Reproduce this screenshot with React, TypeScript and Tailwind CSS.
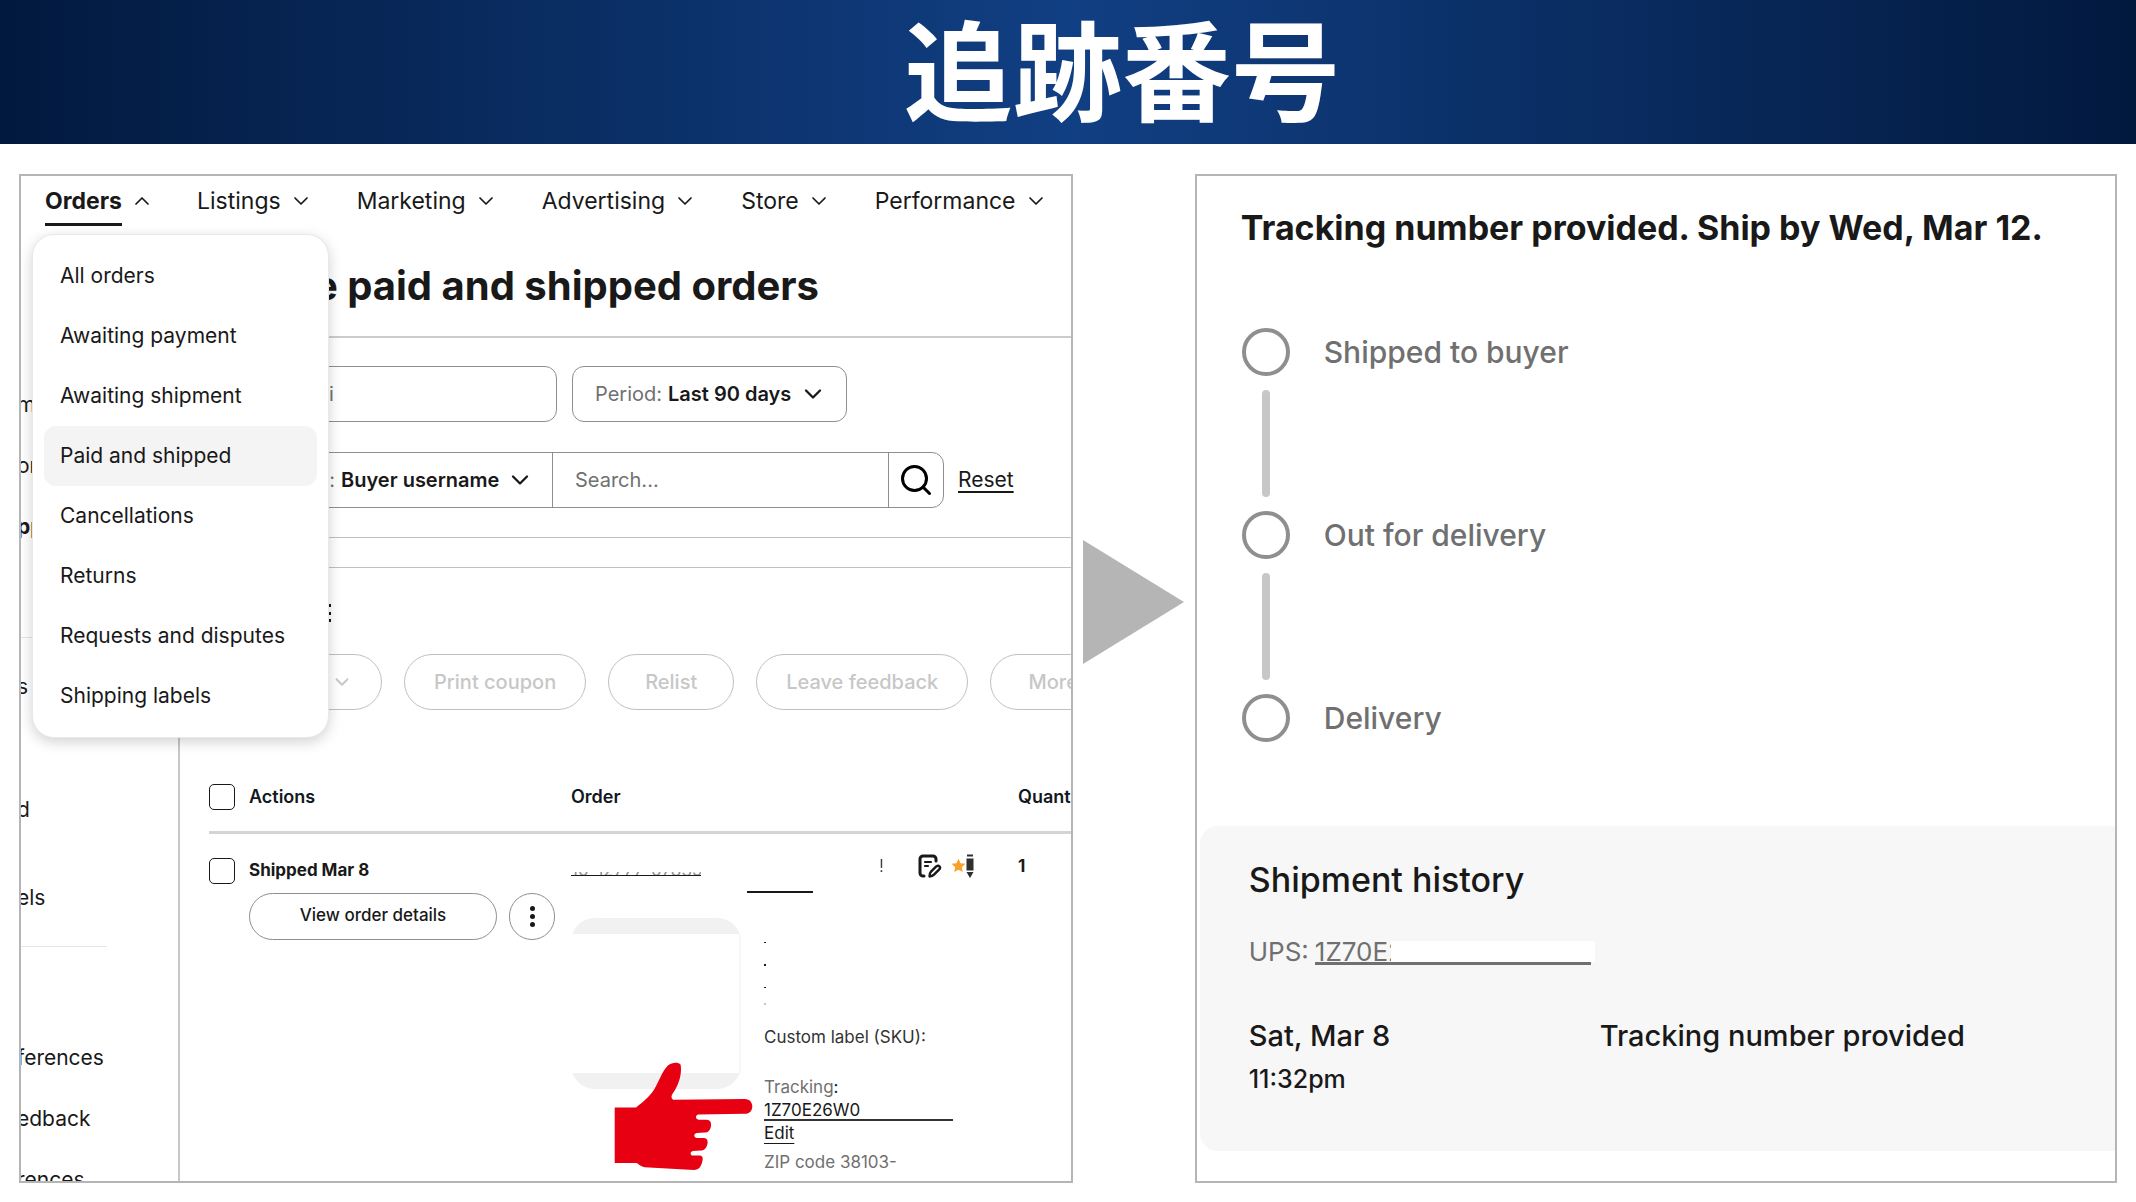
import { Search, ChevronDown, ChevronUp } from "lucide-react";
import type { ReactNode } from "react";

const navItems = ["Listings", "Marketing", "Advertising", "Store", "Performance"];

const orderMenu = [
    "All orders",
    "Awaiting payment",
    "Awaiting shipment",
    "Paid and shipped",
    "Cancellations",
    "Returns",
    "Requests and disputes",
    "Shipping labels",
];

const trackingSteps = ["Shipped to buyer", "Out for delivery", "Delivery"];

const PillButton = ({ children }: { children: ReactNode }) => (
    <button
        disabled
        className="flex h-14 min-w-[126px] shrink-0 items-center justify-center whitespace-nowrap rounded-full border border-[#c0c0c0] px-[29px] text-[20px] font-medium text-[#c7c7c7]"
    >
        {children}
    </button>
);

const Checkbox = ({ label }: { label: string }) => (
    <input
        type="checkbox"
        aria-label={label}
        className="size-[26px] shrink-0 appearance-none rounded-[5px] border border-[#191919]"
    />
);

const NoteIcon = () => (
    <svg viewBox="0 0 24 24" className="size-6" fill="none" stroke="#191919" strokeWidth="3" strokeLinecap="round" strokeLinejoin="round">
        <path d="M18 7V5a3 3 0 0 0-3-3H5a3 3 0 0 0-3 3v14a3 3 0 0 0 3 3h1" />
        <path d="M7 8h6M7 12h3" strokeWidth="2.2" />
        <path d="M11.5 22.5c0-3 .3-3.600 1.500-4.800l5-5c1.200-1.200 2.600-1.200 3.400-.4s.8 2.200-.4 3.400l-5 5c-1.200 1.200-1.700 1.600-4.500 1.800z" strokeWidth="2.4" />
    </svg>
);

const StarIcon = () => (
    <svg viewBox="0 0 24 24" className="size-[15px]" fill="#f9a12b">
        <path d="M12 1l3.300 7.300 7.700.9-5.700 5.400 1.500 7.900L12 18.600l-6.800 3.900 1.500-7.900L1 9.200l7.700-.9z" />
    </svg>
);

const PencilIcon = () => (
    <svg viewBox="0 0 8 24" className="h-6 w-2" fill="#2f2f2f">
        <path d="M1 0.500h6v2H1zM0.500 4.500h7v12h-7zM0.500 18h7L5.500 21.500 4 24 2.500 21.500z" />
    </svg>
);

const PointingHand = () => (
    <svg viewBox="206 304 390 326" preserveAspectRatio="none" className="absolute left-[43px] top-[144px] h-[109px] w-[139px]" fill="#e60012">
        <path d="M208 440H268C290 422 312 402 324 376C336 352 344 328 358 314C368 305 386 303 393 312C397 340 388 368 378 386C370 400 362 408 372 417L573 415C587 415 594 426 594 437C594 449 587 459 573 459L442 461C434 463 434 475 443 477L466 477C477 478 479 486 478 496C476 508 470 515 460 515L438 516C429 518 429 530 438 531L459 531C468 532 470 540 468 549C466 560 460 568 450 569L427 570C419 572 419 583 427 584L446 584C455 585 456 592 454 600C451 616 445 626 430 627L292 619C282 617 276 610 270 606H208Z" />
    </svg>
);

const OrdersNav = () => (
    <nav className="flex items-center whitespace-nowrap pl-6 text-[23px]">
        <div className="relative mr-[43px]">
            <button className="flex h-[50px] items-center gap-2">
                <span className="flex h-[50px] items-center border-b-[3px] border-[#191919] pt-[3px] font-bold">Orders</span>
                <ChevronUp className="size-6" strokeWidth={1.75} />
            </button>
            <ul className="absolute -left-[13px] top-[58px] z-10 w-[297px] rounded-[22px] border border-[#e8e8e8] bg-white px-[11px] py-[11px] text-[21px] shadow-[0_4px_14px_rgba(0,0,0,0.18)]">
                {orderMenu.map((item) => (
                    <li key={item}>
                        <a
                            href="#"
                            className={
                                item === "Paid and shipped"
                                    ? "flex h-[60px] items-center rounded-xl bg-[#f4f4f4] px-4"
                                    : "flex h-[60px] items-center rounded-xl px-4"
                            }
                        >
                            {item}
                        </a>
                    </li>
                ))}
            </ul>
        </div>
        {navItems.map((item) => (
            <button key={item} className="mr-11 flex h-[50px] items-center gap-2">
                {item}
                <ChevronDown className="size-6" strokeWidth={1.75} />
            </button>
        ))}
    </nav>
);

// The side menu runs off the left edge of the panel, only the word ends are left
const SideMenu = () => (
    <aside className="-ml-1 mt-5 w-[163px] shrink-0 border-r-2 border-[#c7c7c7] pt-32 text-[21px] leading-[61px]">
        <a href="#" className="block">m</a>
        <a href="#" className="block">or</a>
        <a href="#" className="block font-bold">pp</a>
        <hr className="mr-[71px] mt-20 border-[#e5e5e5]" />
        <a href="#" className="mt-[18px] block">s</a>
        <a href="#" className="mt-[62px] block">d</a>
        <a href="#" className="mt-[27px] block">els</a>
        <hr className="mr-[71px] mt-[18px] border-[#e5e5e5]" />
        <a href="#" className="mt-20 block">ferences</a>
        <a href="#" className="block">edback</a>
        <a href="#" className="block h-8 overflow-hidden">rences</a>
    </aside>
);

const Filters = () => (
    <div className="border-b border-[#c0c0c0] pb-[29px] pl-[29px] pt-7 text-[20px]">
        <div className="flex gap-[15px]">
            <input
                aria-label="Filter"
                defaultValue="i"
                className="h-14 w-[348px] rounded-xl border border-[#8f8f8f] pl-[119px] text-[#707070]"
            />
            <label className="flex h-14 items-center rounded-xl border border-[#8f8f8f] pl-[22px] pr-[19px] text-[#707070]">
                Period:
                <select className="ml-[6px] w-[131px] appearance-none font-semibold text-[#191919]">
                    <option>Last 90 days</option>
                </select>
                <ChevronDown className="size-7 text-[#191919]" />
            </label>
        </div>
        <div className="mt-[30px] flex items-center">
            <div className="flex h-14 w-[735px] overflow-hidden rounded-xl border border-[#8f8f8f]">
                <label className="flex w-[343px] items-center justify-end border-r border-[#8f8f8f] pr-[18px] text-[#707070]">
                    Search by:
                    <select className="ml-[6px] w-[165px] appearance-none font-semibold text-[#191919]">
                        <option>Buyer username</option>
                    </select>
                    <ChevronDown className="size-7 text-[#191919]" />
                </label>
                <input aria-label="Search" placeholder="Search..." className="min-w-0 flex-1 px-[22px] placeholder:text-[#707070]" />
                <button aria-label="Search" className="flex w-[55px] items-center justify-center border-l border-[#8f8f8f] text-black">
                    <Search className="size-9" />
                </button>
            </div>
            <a href="#" className="ml-[14px] text-[21px] underline underline-offset-4">Reset</a>
        </div>
    </div>
);

const OrdersTable = () => (
    <table className="ml-[29px] mt-[53px] w-[950px] table-fixed text-left text-[17px]">
        <colgroup>
            <col className="w-[362px]" />
            <col className="w-[447px]" />
            <col />
        </colgroup>
        <thead className="border-b-[3px] border-[#d4d4d4]">
            <tr className="h-[69px] text-[18px] text-[#111820]">
                <th className="font-semibold">
                    <div className="flex items-center gap-[14px]">
                        <Checkbox label="Select all" />
                        Actions
                    </div>
                </th>
                <th className="font-semibold">Order</th>
                <th className="font-semibold">Quantity</th>
            </tr>
        </thead>
        <tbody>
            <tr className="align-top">
                <td className="pt-6">
                    <div className="flex gap-[14px]">
                        <Checkbox label="Select order" />
                        <div>
                            <p className="font-bold leading-6">Shipped Mar 8</p>
                            <div className="mt-[11px] flex gap-3">
                                <button className="h-[47px] w-[248px] rounded-full border border-[#8f8f8f] font-medium">View order details</button>
                                <button aria-label="More actions" className="flex h-[47px] w-[46px] flex-col items-center justify-center gap-[3px] rounded-full border border-[#8f8f8f]">
                                    <span className="size-[5px] rounded-full bg-[#191919]" />
                                    <span className="size-[5px] rounded-full bg-[#191919]" />
                                    <span className="size-[5px] rounded-full bg-[#191919]" />
                                </button>
                            </div>
                        </div>
                    </div>
                </td>
                <td className="pt-5">
                    <div className="flex h-16 items-start">
                        <a href="#" aria-label="Order number" className="mt-[18px] flex h-1 w-[130px] items-end overflow-hidden whitespace-nowrap border-b border-[#191919] leading-[10px] text-[#8f8f8f]">
                            10-12777-07839
                        </a>
                        <a href="#" aria-label="Buyer" className="ml-[46px] h-[39px] w-[66px] border-b-2 border-[#191919]" />
                        <span className="ml-[66px] w-[39px] font-light leading-6">!</span>
                        <NoteIcon />
                        <div className="ml-[9px] flex items-center">
                            <StarIcon />
                            <PencilIcon />
                        </div>
                    </div>
                    <div className="relative flex gap-[23px]">
                        <div className="h-[171px] w-[170px] rounded-[24px] bg-[#f1f1f1] py-4">
                            <div className="h-full border-r-2 border-[#f7f7f7] bg-white" />
                        </div>
                        <div className="leading-[23px]">
                            <div className="flex h-[87px] flex-col gap-[21px] pt-6">
                                <span className="size-[2px] bg-[#191919]" />
                                <span className="size-[2px] bg-[#191919]" />
                                <span className="size-[2px] bg-[#191919]" />
                                <span className="-mt-[6px] size-[2px] bg-[#c7c7c7]" />
                            </div>
                            <p className="mt-[21px] text-[#333333]">Custom label (SKU):</p>
                            <p className="mt-[27px] text-[#707070]">
                                Tracking<span className="text-[#191919]">:</span>
                            </p>
                            <a href="#" className="block h-[22px] w-[189px] border-b-2 border-[#333333]">1Z70E26W0</a>
                            <a href="#" className="mt-px block underline underline-offset-4">Edit</a>
                            <p className="mb-1 mt-[6px] text-[#707070]">ZIP code 38103-</p>
                        </div>
                        <PointingHand />
                    </div>
                </td>
                <td className="pt-5 font-bold leading-6">1</td>
            </tr>
        </tbody>
    </table>
);

const OrdersPanel = () => (
    <section className="min-w-0 flex-[1054] overflow-hidden border-2 border-[#b5b5b5]">
        <OrdersNav />
        <div className="flex">
            <SideMenu />
            <div className="min-w-0 flex-1 overflow-hidden">
                <h2 className="whitespace-nowrap border-b-2 border-[#cccccc] pb-[26px] pt-9 text-[40px] font-bold leading-[48px]">
                    Manage paid and shipped orders
                </h2>
                <Filters />
                <div className="mt-[29px] border-t border-[#c0c0c0] pt-[36px]">
                    <div className="ml-[148px] flex h-[18px] w-[3px] flex-col justify-between">
                        <span className="h-[3px] bg-[#191919]" />
                        <span className="h-[3px] bg-[#191919]" />
                        <span className="h-[3px] bg-[#191919]" />
                    </div>
                </div>
                <div className="mt-8 flex gap-[22px] pl-[29px]">
                    <button disabled className="flex h-14 w-[173px] shrink-0 items-center justify-end rounded-full border border-[#c0c0c0] pr-7 text-[20px] font-medium text-[#c7c7c7]">
                        Shipping
                        <ChevronDown className="ml-2 size-[22px]" />
                    </button>
                    <PillButton>Print coupon</PillButton>
                    <PillButton>Relist</PillButton>
                    <PillButton>Leave feedback</PillButton>
                    <PillButton>More</PillButton>
                </div>
                <OrdersTable />
            </div>
        </div>
    </section>
);

const TrackingPanel = () => (
    <section className="flex min-w-0 flex-[922] flex-col overflow-hidden border-2 border-[#b5b5b5]">
        <h2 className="whitespace-nowrap pl-11 pt-8 text-[34px] font-bold leading-10">
            Tracking number provided. Ship by Wed, Mar 12.
        </h2>
        <ol className="pl-[45px] pt-20 text-[30px] font-medium text-[#707070]">
            {trackingSteps.map((step, i) => (
                <li key={step}>
                    <div className="flex h-12 items-center gap-[34px]">
                        <span className="size-12 rounded-full border-4 border-[#8f8f8f]" />
                        {step}
                    </div>
                    {i < trackingSteps.length - 1 && (
                        <div className="my-[14px] ml-5 h-[107px] w-2 rounded-full bg-[#c7c7c7]" />
                    )}
                </li>
            ))}
        </ol>
        <div className="mb-[30px] ml-[3px] mt-auto rounded-l-[18px] bg-[#f7f7f7] pb-[49px] pl-[49px] pt-8">
            <h3 className="text-[34px] font-medium leading-[44px]">Shipment history</h3>
            <div className="mt-[39px] flex text-[26px] leading-[21px] text-[#707070]">
                UPS:
                <a href="#" aria-label="Tracking number" className="ml-[6px] flex h-6 w-[276px] border-b-[3px] border-[#707070]">
                    <span className="w-[76px] overflow-hidden">1Z70E26W0</span>
                    <span className="-mr-1 flex-1 bg-white" />
                </a>
            </div>
            <div className="mt-[51px] flex text-[29px] font-medium leading-10">
                <div className="w-[351px]">
                    <p>Sat, Mar 8</p>
                    <p className="text-[25px] leading-[46px]">11:32pm</p>
                </div>
                <p className="whitespace-nowrap">Tracking number provided</p>
            </div>
        </div>
    </section>
);

export default function App() {
    return (
        <div className="bg-white font-['Inter','Liberation_Sans',sans-serif] text-[#191919]">
            <header className="bg-[linear-gradient(to_right,#02193e,#113f83_50%,#02193e)] pb-3 pl-[108px] text-center">
                <h1 className="font-['Noto_Sans_CJK_JP',sans-serif] text-[109px] font-bold leading-[132px] text-white">追跡番号</h1>
            </header>
            <main className="flex items-stretch px-[19px] pb-[19px] pt-[30px]">
                <OrdersPanel />
                <div className="flex w-[122px] shrink-0 items-center justify-center pb-[154px]">
                    <svg viewBox="0 0 101 124" className="w-[101px]" fill="#b5b5b5">
                        <path d="M0 0L101 62L0 124Z" />
                    </svg>
                </div>
                <TrackingPanel />
            </main>
        </div>
    );
}
